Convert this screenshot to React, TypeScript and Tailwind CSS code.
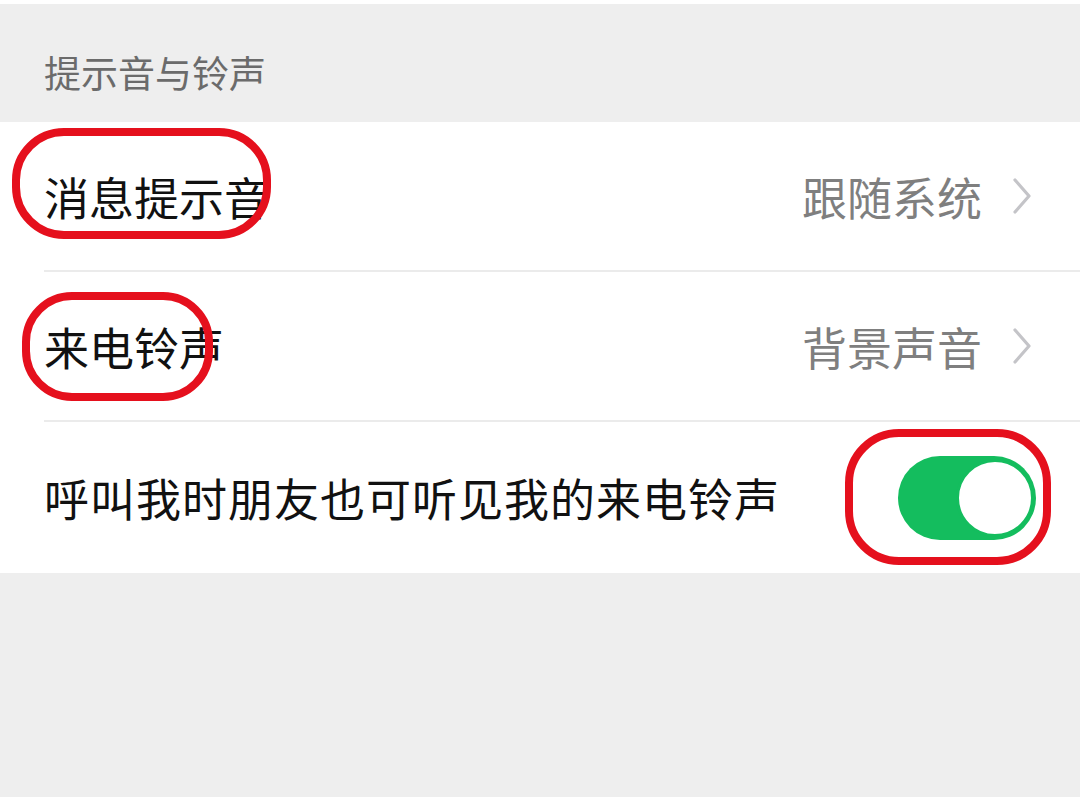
import React, { useState } from "react";

const font = { fontFamily: '"Noto Sans CJK SC", "Noto Sans", sans-serif' };

function Chevron() {
  return (
    <svg width="20" height="36" viewBox="0 0 20 36" className="ml-[30px]">
      <path d="M3 2 L17 18 L3 34" fill="none" stroke="#c4c4c8" strokeWidth="3.2" strokeLinecap="round" strokeLinejoin="round" />
    </svg>
  );
}

function LinkRow({ title, value, divider }: { title: string; value: string; divider: boolean }) {
  return (
    <div className="pl-[44px]">
      <div className={"flex items-center h-[150px] pr-[48px] " + (divider ? "border-b-2 border-[#ebebeb]" : "")}>
        <span className="flex-1 text-[45px] text-[#111] leading-none">{title}</span>
        <span className="text-[45px] text-[#7f7f7f] leading-none">{value}</span>
        <Chevron />
      </div>
    </div>
  );
}

function Toggle() {
  const [on, setOn] = useState(true);
  return (
    <button
      onClick={() => setOn(!on)}
      className={"relative w-[138px] h-[84px] rounded-full " + (on ? "bg-[#14bd5e]" : "bg-[#e5e5e5]")}
    >
      <span
        className={
          "absolute top-[3px] w-[78px] h-[78px] rounded-full bg-white " +
          (on ? "right-[2px] border-[3px] border-[#14bd5e]" : "left-[2px]")
        }
      />
    </button>
  );
}

export default function App() {
  return (
    <div className="relative w-full h-[797px] bg-[#eeeeee] overflow-hidden" style={font}>
      <div className="h-[4px] bg-white" />
      <div className="h-[118px] flex items-center pl-[44px] pt-[18px]">
        <span className="text-[37px] text-[#6b6b6b] leading-none">提示音与铃声</span>
      </div>

      <div className="bg-white">
        <LinkRow title="消息提示音" value="跟随系统" divider />
        <LinkRow title="来电铃声" value="背景声音" divider />
        <div className="flex items-center h-[151px] pl-[44px] pr-[44px]">
          <span className="flex-1 text-[45px] tracking-[1px] text-[#111] leading-none">呼叫我时朋友也可听见我的来电铃声</span>
          <Toggle />
        </div>
      </div>

      {/* hand-drawn red marks */}
      <div className="absolute left-[12px] top-[128px] w-[259px] h-[111px] border-[8px] border-[#e5101d] rounded-[52px]" />
      <div className="absolute left-[22px] top-[292px] w-[191px] h-[109px] border-[8px] border-[#e5101d] rounded-[50px]" />
      <div className="absolute left-[845px] top-[429px] w-[206px] h-[136px] border-[8px] border-[#e5101d] rounded-[54px]" />
    </div>
  );
}
